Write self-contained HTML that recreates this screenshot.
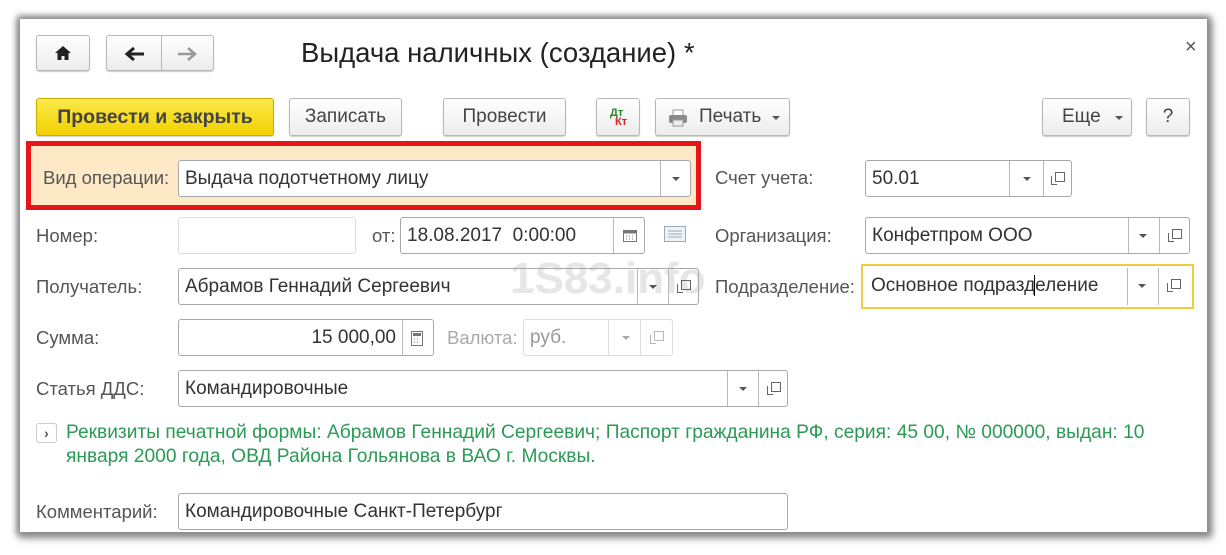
<!DOCTYPE html>
<html><head><meta charset="utf-8"><style>
*{box-sizing:border-box;margin:0;padding:0}
body{width:1226px;height:555px;background:#fff;position:relative;overflow:hidden;font-family:"Liberation Sans",Arial,sans-serif;color:#333}
.win{position:absolute;left:20px;top:19px;width:1187px;height:513px;background:#fff;box-shadow:0 0 6px 3px #8a8a8a, 2px 3px 8px 3px #999}
.a{position:absolute}
.btn{position:absolute;border:1px solid #b8b8b8;border-radius:3px;background:linear-gradient(#fff,#ececec);box-shadow:0 1px 1px #ccc;font-size:19px;color:#444;text-align:center;line-height:36px}
.lbl{position:absolute;font-size:18.5px;color:#555;line-height:20px;white-space:nowrap}
.fld{position:absolute;border:1px solid #a8a8a8;border-radius:3px;background:#fff;height:37px;font-size:19px;color:#333;line-height:35px;padding-left:6px;white-space:nowrap}
.dv{position:absolute;top:0;bottom:0;border-left:1px solid #b8b8b8}
.dd{position:absolute;top:16px;width:0;height:0;border-left:4px solid transparent;border-right:4px solid transparent;border-top:4px solid #555}
.cp{position:absolute;top:11px;width:13px;height:13px}
.cp:before{content:"";position:absolute;left:4px;top:0;width:8px;height:8px;border:1.5px solid #666}
.cp:after{content:"";position:absolute;left:0;top:4px;width:5px;height:8px;border-left:1.5px solid #666;border-bottom:1.5px solid #666}
</style></head><body>
<div class="win"></div>

<div class="btn" style="left:36px;top:35px;width:54px;height:36px"><svg width="18" height="16" viewBox="0 0 18 16" style="margin-top:9px"><path d="M9 1L1 8h2.5v7h4v-4h3v4h4V8H17z" fill="#222"/></svg></div>
<div class="btn" style="left:106px;top:35px;width:108px;height:36px"><div class="dv" style="left:54px"></div>
<svg class="a" style="left:17px;top:10px" width="22" height="16" viewBox="0 0 22 16"><path d="M20 8H4M10 2L3 8l7 6" stroke="#222" stroke-width="3" fill="none"/></svg>
<svg class="a" style="left:69px;top:10px" width="22" height="16" viewBox="0 0 22 16"><path d="M2 8h16M12 2l7 6-7 6" stroke="#999" stroke-width="2.5" fill="none"/></svg></div>
<div class="a" style="left:301px;top:37px;font-size:27.5px;color:#222;white-space:nowrap">Выдача наличных (создание) *</div>
<div class="a" style="left:1185px;top:36px;font-size:20px;color:#555">×</div>

<div class="btn" style="left:36px;top:98px;width:238px;height:38px;background:linear-gradient(#fbe94a,#f2d000);border-color:#c9ad00;font-weight:bold;color:#444;font-size:19.5px">Провести и закрыть</div>
<div class="btn" style="left:289px;top:98px;width:113px;height:38px">Записать</div>
<div class="btn" style="left:443px;top:98px;width:123px;height:38px">Провести</div>
<div class="btn" style="left:596px;top:98px;width:44px;height:38px;line-height:11px;font-size:11px;font-weight:bold;text-align:left"><div class="a" style="left:13px;top:9px;color:#2a8a2a">Дт</div><div class="a" style="left:18px;top:18px;color:#d22">Кт</div></div>
<div class="btn" style="left:655px;top:98px;width:135px;height:38px;text-align:left">
<svg class="a" style="left:12px;top:10px" width="20" height="18" viewBox="0 0 20 18"><rect x="5" y="1" width="10" height="6" fill="#fff" stroke="#999"/><rect x="1" y="6" width="18" height="8" rx="2" fill="#8a8a8a"/><rect x="5" y="11" width="10" height="6" fill="#eee" stroke="#999"/></svg>
<span class="a" style="left:43px;top:0">Печать</span><div class="dd" style="left:116px;top:17px"></div></div>
<div class="btn" style="left:1042px;top:98px;width:90px;height:38px;text-align:left"><span class="a" style="left:19px">Еще</span><div class="dd" style="left:72px;top:17px"></div></div>
<div class="btn" style="left:1146px;top:98px;width:44px;height:38px">?</div>

<div class="a" style="left:26px;top:141px;width:675px;height:69px;border:5px solid #e8141c;background:#fde9c6"></div>
<div class="lbl" style="left:43px;top:168px">Вид операции:</div>
<div class="fld" style="left:178px;top:160px;width:513px">Выдача подотчетному лицу<div class="dv" style="left:481px"></div><div class="dd" style="left:493px"></div></div>

<div class="lbl" style="left:715px;top:168px">Счет учета:</div>
<div class="fld" style="left:865px;top:160px;width:207px">50.01<div class="dv" style="left:143px"></div><div class="dd" style="left:157px"></div><div class="dv" style="left:177px"></div><div class="cp" style="left:185px"></div></div>

<div class="lbl" style="left:36px;top:226px">Номер:</div>
<div class="fld" style="left:178px;top:217px;width:178px;border-color:#ddd"></div>
<div class="lbl" style="left:372px;top:226px">от:</div>
<div class="fld" style="left:400px;top:217px;width:245px">18.08.2017&nbsp; 0:00:00<div class="dv" style="left:212px"></div>
<svg class="a" style="left:222px;top:12px" width="14" height="12"><rect x=".5" y=".5" width="13" height="11" fill="#fff" stroke="#777"/><rect x=".5" y=".5" width="13" height="3" fill="#777"/><path d="M3 6h1M6 6h1M9 6h1M3 9h1M6 9h1M9 9h1" stroke="#777"/></svg></div>
<svg class="a" style="left:664px;top:226px" width="22" height="16"><rect x=".5" y=".5" width="21" height="15" fill="#eef3f8" stroke="#9ab"/><path d="M4 5h14M4 8h14M4 11h14" stroke="#9ab"/></svg>
<div class="lbl" style="left:715px;top:226px">Организация:</div>
<div class="fld" style="left:865px;top:217px;width:325px">Конфетпром ООО<div class="dv" style="left:262px"></div><div class="dd" style="left:273px"></div><div class="dv" style="left:293px"></div><div class="cp" style="left:302px"></div></div>

<div class="a" style="left:510px;top:254px;font-size:44px;font-weight:bold;color:#e6e6e6;white-space:nowrap">1S83.info</div>
<div class="lbl" style="left:36px;top:277px">Получатель:</div>
<div class="fld" style="left:178px;top:268px;width:521px;background:transparent">Абрамов Геннадий Сергеевич<div class="dv" style="left:458px"></div><div class="dd" style="left:470px"></div><div class="dv" style="left:489px"></div><div class="cp" style="left:498px"></div></div>
<div class="lbl" style="left:715px;top:277px">Подразделение:</div>
<div class="a" style="left:861px;top:264px;width:333px;height:45px;border:2px solid #f0cc40"></div>
<div class="fld" style="left:865px;top:268px;width:325px;border:none;background:transparent">Основное подразд<span style="border-left:1.5px solid #000;margin-left:-1px"></span>еление<div class="dv" style="left:262px"></div><div class="dd" style="left:273px"></div><div class="dv" style="left:293px"></div><div class="cp" style="left:302px"></div></div>

<div class="lbl" style="left:36px;top:328px">Сумма:</div>
<div class="fld" style="left:178px;top:319px;width:256px;text-align:right;padding-right:37px">15 000,00<div class="dv" style="left:223px"></div>
<svg class="a" style="left:232px;top:11px" width="12" height="15"><rect x=".5" y=".5" width="11" height="14" fill="#fff" stroke="#777"/><rect x="2" y="2" width="8" height="3" fill="#777"/><path d="M3 8h1M6 8h1M9 8h0M3 11h1M6 11h1" stroke="#777"/></svg></div>
<div class="lbl" style="left:447px;top:328px;color:#aaa">Валюта:</div>
<div class="fld" style="left:523px;top:319px;width:150px;border-color:#ddd;color:#999">руб.<div class="dv" style="left:84px;border-color:#ddd"></div><div class="dd" style="left:98px;border-top-color:#aaa"></div><div class="dv" style="left:116px;border-color:#ddd"></div><div class="cp" style="left:126px;opacity:.45"></div></div>

<div class="lbl" style="left:36px;top:379px">Статья ДДС:</div>
<div class="fld" style="left:178px;top:370px;width:610px">Командировочные<div class="dv" style="left:548px"></div><div class="dd" style="left:560px"></div><div class="dv" style="left:579px"></div><div class="cp" style="left:588px"></div></div>

<div class="a" style="left:36px;top:423px;width:21px;height:20px;border:1px solid #ccc;border-radius:3px;font-size:14px;line-height:18px;text-align:center;color:#555;font-weight:bold">›</div>
<div class="a" style="left:66px;top:421px;width:1140px;font-size:19.2px;line-height:24px;color:#2a9a55;white-space:nowrap">Реквизиты печатной формы: Абрамов Геннадий Сергеевич; Паспорт гражданина РФ, серия: 45 00, № 000000, выдан: 10<br>января 2000 года, ОВД Района Гольянова в ВАО г. Москвы.</div>

<div class="lbl" style="left:36px;top:502px">Комментарий:</div>
<div class="fld" style="left:178px;top:493px;width:610px">Командировочные Санкт-Петербург</div>
</body></html>
